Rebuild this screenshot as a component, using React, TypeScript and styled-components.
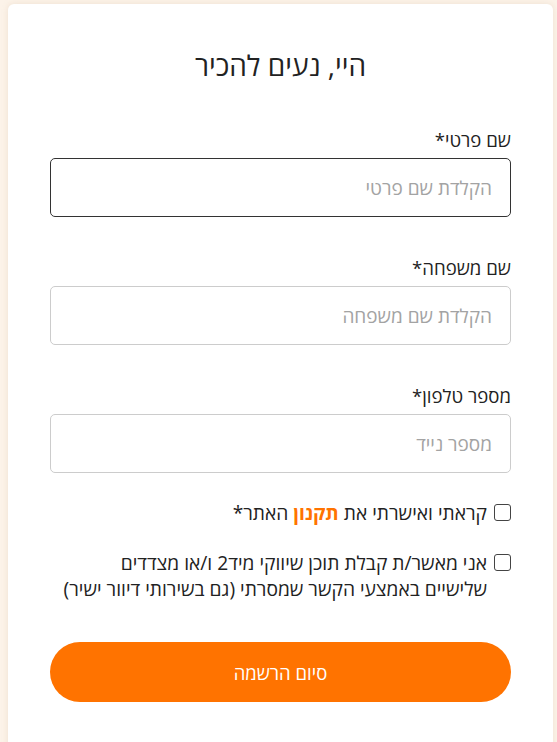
import styled, { createGlobalStyle } from "styled-components";

const GlobalStyle = createGlobalStyle`
  html, body {
    margin: 0;
    background: #fcf3e9;
  }
  body {
    font-family: "Open Sans", "DejaVu Sans", sans-serif;
    color: #333;
  }
`;

const Page = styled.div`
  padding: 4px 4px 0 8px;
  height: 742px;
  box-sizing: border-box;
  overflow: hidden;
`;

const Card = styled.div`
  direction: rtl;
  background: #fff;
  border-radius: 6px 6px 0 0;
  box-shadow: 0 0 6px rgba(200, 170, 140, 0.25);
  padding: 41px 42px 60px 42px;
  min-height: 760px;
  box-sizing: border-box;
`;

const Title = styled.h1`
  margin: 0 0 41px;
  text-align: center;
  font-size: 28px;
  font-weight: 400;
  color: #222;
  line-height: 40px;
`;

const Field = styled.div`
  display: flex;
  flex-direction: column;
  gap: 4px;
  margin-bottom: 37px;
`;

const Label = styled.label`
  font-size: 18.6px;
  line-height: 28px;
  color: #222;
`;

const Input = styled.input<{ $focused?: boolean }>`
  height: 59px;
  box-sizing: border-box;
  border: 1px solid ${(p) => (p.$focused ? "#333" : "#ccc")};
  border-radius: 5px;
  padding: 0 18px;
  font-family: inherit;
  font-size: 19px;
  color: #333;
  direction: rtl;
  outline: none;
  background: #fff;
  &::placeholder {
    color: #a3a3a3;
  }
`;

const Checks = styled.div`
  display: flex;
  flex-direction: column;
  gap: 24px;
  margin-top: -10px;
`;

const CheckRow = styled.label`
  display: flex;
  align-items: flex-start;
  gap: 7px;
  font-size: 19.2px;
  line-height: 26px;
  color: #222;
`;

const CheckText = styled.span`
  padding-left: 8px;
`;

const Box = styled.input`
  appearance: none;
  flex: none;
  width: 17px;
  height: 17px;
  margin: 4px 0 0;
  border: 1.5px solid #444;
  border-radius: 3px;
  background: #fff;
  box-sizing: border-box;
`;

const Link = styled.span`
  color: #ff7300;
  font-weight: 700;
`;

const Submit = styled.button`
  margin-top: 40px;
  width: 100%;
  height: 60px;
  border: none;
  border-radius: 30px;
  background: #ff7300;
  color: #fff;
  font-family: inherit;
  font-size: 18.5px;
  cursor: pointer;
`;

export default function App() {
  return (
    <>
      <GlobalStyle />
      <Page>
        <Card>
          <Title>היי, נעים להכיר</Title>
          <Field>
            <Label>שם פרטי*</Label>
            <Input $focused placeholder="הקלדת שם פרטי" />
          </Field>
          <Field>
            <Label>שם משפחה*</Label>
            <Input placeholder="הקלדת שם משפחה" />
          </Field>
          <Field>
            <Label>מספר טלפון*</Label>
            <Input placeholder="מספר נייד" />
          </Field>
          <Checks>
            <CheckRow>
              <Box type="checkbox" />
              <CheckText>
                קראתי ואישרתי את <Link>תקנון</Link> האתר*
              </CheckText>
            </CheckRow>
            <CheckRow>
              <Box type="checkbox" />
              <CheckText>
                אני מאשר/ת קבלת תוכן שיווקי מיד2 ו/או מצדדים שלישיים באמצעי הקשר
                שמסרתי (גם בשירותי דיוור ישיר)
              </CheckText>
            </CheckRow>
          </Checks>
          <Submit>סיום הרשמה</Submit>
        </Card>
      </Page>
    </>
  );
}
